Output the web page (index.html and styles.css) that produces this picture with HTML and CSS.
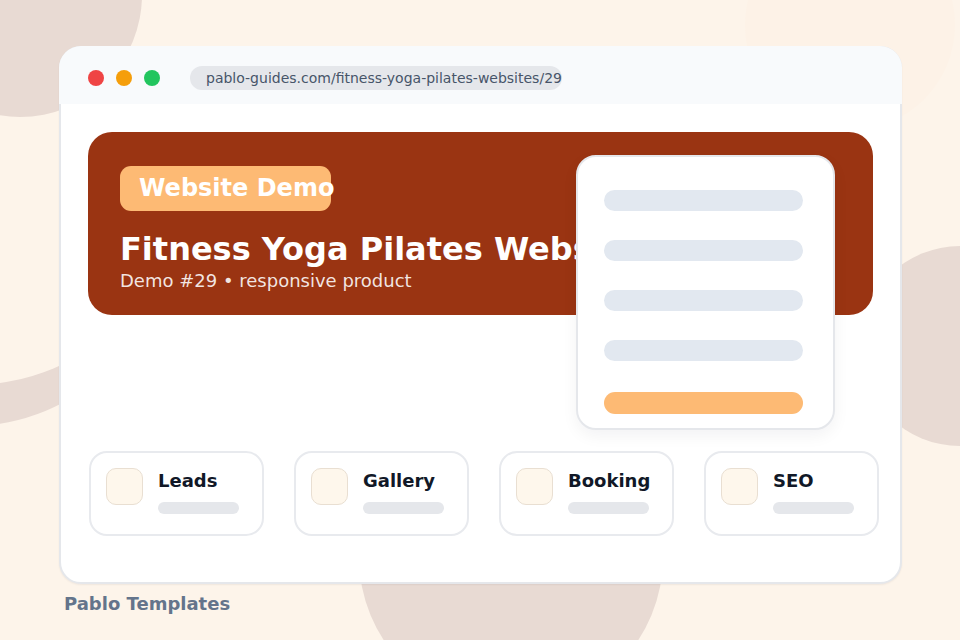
FILE: index.html
```html
<!DOCTYPE html>
<html lang="en">
<head>
<meta charset="utf-8">
<title>Fitness Yoga Pilates Websites — Demo #29</title>
<link rel="stylesheet" href="styles.css">
</head>
<body>
<div class="scene">
  <div class="blob blob-b"></div>
  <div class="blob blob-c"></div>
  <div class="blob blob-a"></div>
  <div class="blob blob-d"></div>
  <div class="blob blob-e"></div>
  <div class="blob blob-f"></div>

  <div class="window">
    <div class="topbar">
      <span class="dot dot-red"></span>
      <span class="dot dot-amber"></span>
      <span class="dot dot-green"></span>
      <div class="url">pablo-guides.com/fitness-yoga-pilates-websites/29</div>
    </div>

    <section class="hero">
      <div class="badge">Website Demo</div>
      <h1 class="hero-title">Fitness Yoga Pilates Websites</h1>
      <p class="hero-sub">Demo #29 • responsive product</p>
    </section>

    <div class="features">
      <div class="feature">
        <span class="feature-icon"></span>
        <div class="feature-text">
          <div class="feature-title">Leads</div>
          <span class="feature-bar"></span>
        </div>
      </div>
      <div class="feature">
        <span class="feature-icon"></span>
        <div class="feature-text">
          <div class="feature-title">Gallery</div>
          <span class="feature-bar"></span>
        </div>
      </div>
      <div class="feature">
        <span class="feature-icon"></span>
        <div class="feature-text">
          <div class="feature-title">Booking</div>
          <span class="feature-bar"></span>
        </div>
      </div>
      <div class="feature">
        <span class="feature-icon"></span>
        <div class="feature-text">
          <div class="feature-title">SEO</div>
          <span class="feature-bar"></span>
        </div>
      </div>
    </div>

    <div class="panel">
      <span class="panel-bar"></span>
      <span class="panel-bar"></span>
      <span class="panel-bar"></span>
      <span class="panel-bar"></span>
      <span class="panel-bar panel-bar-accent"></span>
    </div>
  </div>

  <div class="brand">Pablo Templates</div>
</div>
</body>
</html>
```

FILE: styles.css
```css
* {
  box-sizing: border-box;
}

html,
body {
  margin: 0;
  padding: 0;
}

body {
  width: 960px;
  height: 640px;
  overflow: hidden;
  background: #fdf4ea;
  font-family: "DejaVu Sans", "Liberation Sans", sans-serif;
}

.scene {
  position: relative;
  width: 960px;
  height: 640px;
  overflow: hidden;
  padding: 46px 0 0 59px;
}

/* decorative background blobs */
.blob {
  position: absolute;
  border-radius: 50%;
  background: #e8dad3;
}

.blob-b {
  left: -227px;
  top: 32px;
  width: 394px;
  height: 394px;
}

.blob-c {
  left: -248px;
  top: -51px;
  width: 436px;
  height: 436px;
  background: #fdf4ea;
}

.blob-a {
  left: -102px;
  top: -127px;
  width: 244px;
  height: 244px;
}

.blob-d {
  left: 860px;
  top: 246px;
  width: 200px;
  height: 200px;
}

.blob-e {
  left: 359px;
  top: 405px;
  width: 304px;
  height: 304px;
}

.blob-f {
  left: 745px;
  top: -80px;
  width: 210px;
  height: 210px;
  background: #fdf2e7;
}

/* browser window */
.window {
  position: relative;
  width: 843px;
  height: 538px;
  background: #ffffff;
  border: 2px solid #e5e7eb;
  border-radius: 22px;
  box-shadow: 0 1px 2px rgba(15, 23, 42, 0.06);
}

.topbar {
  display: flex;
  align-items: center;
  height: 58px;
  margin: -2px -2px 0;
  padding: 6px 29px 0;
  background: #f8fafc;
  border-radius: 22px 22px 0 0;
}

.dot {
  width: 16px;
  height: 16px;
  border-radius: 50%;
  margin-right: 12px;
  flex: none;
}

.dot-red {
  background: #ef4444;
}

.dot-amber {
  background: #f59e0b;
}

.dot-green {
  background: #22c55e;
}

.url {
  margin-left: 18px;
  width: 372px;
  height: 24px;
  padding-left: 16px;
  border-radius: 12px;
  background: #e5e7eb;
  color: #475569;
  font-size: 14px;
  line-height: 24px;
  white-space: nowrap;
}

/* hero */
.hero {
  height: 183px;
  margin: 28px 27px 0;
  padding: 34px 32px 0;
  background: #9a3412;
  border-radius: 24px;
  overflow: hidden;
}

.badge {
  width: 211px;
  height: 45px;
  padding-left: 19px;
  border-radius: 11px;
  background: #fdba74;
  color: #ffffff;
  font-size: 24px;
  font-weight: 700;
  line-height: 45px;
  white-space: nowrap;
}

.hero-title {
  margin: 19px 0 0;
  color: #ffffff;
  font-size: 32px;
  font-weight: 700;
  line-height: 38px;
  white-space: nowrap;
}

.hero-sub {
  margin: 2px 0 0;
  color: rgba(255, 255, 255, 0.88);
  font-size: 18px;
  line-height: 22px;
  white-space: nowrap;
}

/* feature cards */
.features {
  display: flex;
  gap: 30px;
  margin: 136px 0 0 28px;
}

.feature {
  display: flex;
  flex: none;
  width: 175px;
  height: 85px;
  padding: 15px;
  border: 2px solid #e8eaee;
  border-radius: 18px;
  background: #ffffff;
}

.feature-icon {
  flex: none;
  width: 37px;
  height: 37px;
  margin-right: 15px;
  border: 1px solid #e9dfd2;
  border-radius: 10px;
  background: #fef7ec;
}

.feature-text {
  display: flex;
  flex-direction: column;
  padding-top: 2px;
}

.feature-title {
  color: #111827;
  font-size: 18px;
  font-weight: 700;
  line-height: 22px;
  white-space: nowrap;
}

.feature-bar {
  display: block;
  width: 81px;
  height: 12px;
  margin-top: 10px;
  border-radius: 6px;
  background: #e5e7eb;
}

/* floating panel over the hero */
.panel {
  position: absolute;
  left: 515px;
  top: 107px;
  width: 259px;
  height: 275px;
  display: flex;
  flex-direction: column;
  padding: 33px 0 0 26px;
  background: #ffffff;
  border: 2px solid #e5e7eb;
  border-radius: 20px;
  box-shadow: 0 6px 16px rgba(15, 23, 42, 0.05);
}

.panel-bar {
  display: block;
  width: 199px;
  height: 21px;
  margin-bottom: 29px;
  border-radius: 11px;
  background: #e2e8f0;
}

.panel-bar-accent {
  height: 22px;
  margin-top: 2px;
  margin-bottom: 0;
  background: #fdba74;
}

.brand {
  margin: 9px 0 0 5px;
  color: #64748b;
  font-size: 18px;
  font-weight: 700;
  line-height: 22px;
}
```
